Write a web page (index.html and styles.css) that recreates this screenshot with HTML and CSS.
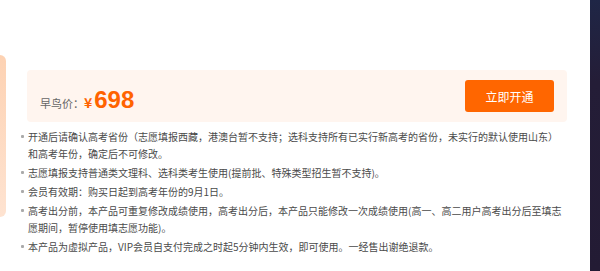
FILE: index.html
```html
<!DOCTYPE html>
<html lang="zh-CN">
<head>
    <meta charset="UTF-8">
    <meta name="viewport" content="width=device-width, initial-scale=1.0">
    <title>VIP会员开通</title>
    <link rel="stylesheet" href="styles.css">
</head>
<body>
    <div class="side-card"></div>

    <div class="main">
        <div class="price-box">
            <div class="price">
                <span class="price-label">早鸟价：</span>
                <span class="price-unit">¥</span>
                <span class="price-num">698</span>
            </div>
            <button class="buy-btn">立即开通</button>
        </div>

        <ul class="notes">
            <li>开通后请确认高考省份（志愿填报西藏，港澳台暂不支持；选科支持所有已实行新高考的省份，未实行的默认使用山东）和高考年份，确定后不可修改。</li>
            <li>志愿填报支持普通类文理科、选科类考生使用(提前批、特殊类型招生暂不支持)。</li>
            <li>会员有效期：购买日起到高考年份的9月1日。</li>
            <li>高考出分前，本产品可重复修改成绩使用，高考出分后，本产品只能修改一次成绩使用(高一、高二用户高考出分后至填志愿期间，暂停使用填志愿功能)。</li>
            <li>本产品为虚拟产品，VIP会员自支付完成之时起5分钟内生效，即可使用。一经售出谢绝退款。</li>
        </ul>
    </div>

    <div class="dark-edge"></div>
</body>
</html>
```

FILE: styles.css
```css
html, body {
    margin: 0;
    height: 100%;
}
body {
    display: flex;
    height: 271px;
    overflow: hidden;
    background: #fff;
    font-family: "Noto Sans CJK SC", "Liberation Sans", sans-serif;
    color: #4a4a4a;
}

/* 左侧露出的上一张卡片 */
.side-card {
    flex: 0 0 6px;
    height: 162px;
    margin-top: 55px;
    border-radius: 0 6px 6px 0;
    background: linear-gradient(#fdd2b3, #fee3d1);
}

.main {
    flex: 1;
    padding-top: 70px;
    min-width: 0;
}

.price-box {
    display: flex;
    align-items: center;
    justify-content: space-between;
    height: 52px;
    margin: 0 23px 0 21px;
    padding: 0 13px 0 13px;
    box-sizing: border-box;
    background: #fff5ef;
    border-radius: 4px;
}
.price {
    display: flex;
    align-items: baseline;
    padding-top: 8px;
}
.price-label {
    font-size: 11px;
    color: #666;
}
.price-unit {
    font-size: 14px;
    font-weight: bold;
    color: #ff6300;
}
.price-num {
    margin-left: 2px;
    font-family: "Liberation Sans", Arial, sans-serif;
    font-size: 24px;
    font-weight: bold;
    color: #ff6300;
}
.buy-btn {
    width: 89px;
    height: 32px;
    border: none;
    border-radius: 3px;
    background: #ff6600;
    color: #fff;
    font-family: inherit;
    font-size: 12px;
    cursor: pointer;
}

.notes {
    list-style: none;
    margin: 6px 0 0 15px;
    padding: 0;
    width: 544px;
    font-size: 10px;
    line-height: 17px;
}
.notes li {
    position: relative;
    padding-left: 7px;
    margin-bottom: 2px;
}
.notes li::before {
    content: "";
    position: absolute;
    left: 0;
    top: 7px;
    width: 3px;
    height: 3px;
    border-radius: 1px;
    background: #aaa;
}

.dark-edge {
    flex: 0 0 10px;
    background: linear-gradient(#1f2646, #241d37 30%, #231b34);
}
```
